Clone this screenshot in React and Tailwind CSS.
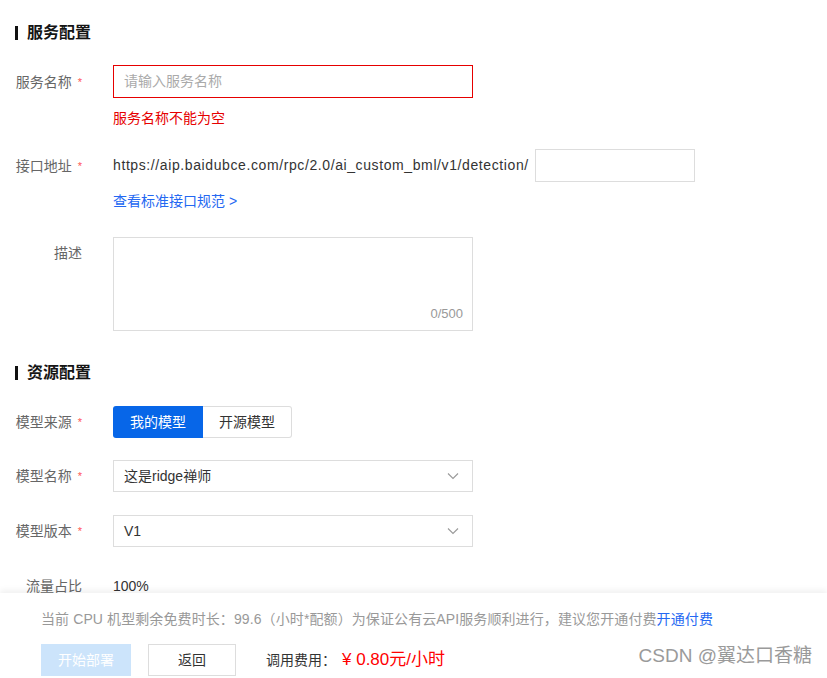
import React from "react";

const FONT = { fontFamily: '"Liberation Sans", "Noto Sans CJK SC", sans-serif' };

function Label({ children, required }) {
  return (
    <div className="w-[67px] shrink-0 flex justify-end items-center text-[14px] leading-[20px] text-[#666]">
      <span>{children}</span>
      {required && <span className="ml-[6px] text-[#f55] text-[11px]">*</span>}
    </div>
  );
}

function SectionTitle({ children }) {
  return (
    <div className="flex items-center h-[20px]">
      <span className="w-[3px] h-[14px] bg-[#111]" />
      <span className="ml-[9px] text-[16px] font-bold text-[#151515]">{children}</span>
    </div>
  );
}

function Chevron() {
  return (
    <svg width="12" height="8" viewBox="0 0 12 8" fill="none">
      <path d="M1 1.5L6 6.5L11 1.5" stroke="#999" strokeWidth="1.1" />
    </svg>
  );
}

function Select({ value }) {
  return (
    <div className="w-[360px] h-[32px] border border-[#ddd] flex items-center justify-between px-[10px] text-[14px] text-[#333]">
      <span>{value}</span>
      <span className="mr-[3px]"><Chevron /></span>
    </div>
  );
}

export default function App() {
  return (
    <div className="relative w-[827px] h-[678px] bg-white overflow-hidden" style={FONT}>
      <div className="px-[15px] pt-[23px]">
        <SectionTitle>服务配置</SectionTitle>

        <div className="mt-[22px] flex items-center gap-[31px]">
          <Label required>服务名称</Label>
          <div className="w-[360px] h-[33px] border border-[#e60000] flex items-center px-[10px] text-[14px] text-[#aaa]">
            请输入服务名称
          </div>
        </div>
        <div className="mt-[10px] ml-[98px] text-[14px] leading-[20px] text-[#e60000]">服务名称不能为空</div>

        <div className="mt-[21px] flex items-center gap-[31px]">
          <Label required>接口地址</Label>
          <div className="flex items-center">
            <span className="text-[14px] text-[#333] tracking-[0.6px]">https://aip.baidubce.com/rpc/2.0/ai_custom_bml/v1/detection/</span>
            <div className="ml-[6px] w-[160px] h-[33px] border border-[#ddd]" />
          </div>
        </div>
        <div className="mt-[9px] ml-[98px] text-[14px] leading-[20px] text-[#2468f2]">查看标准接口规范 &gt;</div>

        <div className="mt-[26px] flex items-start gap-[31px]">
          <div className="pt-[6px]"><Label>描述</Label></div>
          <div className="relative w-[360px] h-[94px] border border-[#ddd]">
            <span className="absolute right-[9px] bottom-[7px] text-[13px] text-[#999]">0/500</span>
          </div>
        </div>

        <div className="mt-[32px]">
          <SectionTitle>资源配置</SectionTitle>
        </div>

        <div className="mt-[23px] flex items-center gap-[31px]">
          <Label required>模型来源</Label>
          <div className="flex h-[32px] text-[14px]">
            <div className="w-[90px] flex items-center justify-center bg-[#0766e8] text-white rounded-l-[3px]">我的模型</div>
            <div className="w-[89px] flex items-center justify-center border border-[#ddd] border-l-0 text-[#333] rounded-r-[3px]">开源模型</div>
          </div>
        </div>

        <div className="mt-[22px] flex items-center gap-[31px]">
          <Label required>模型名称</Label>
          <Select value="这是ridge禅师" />
        </div>

        <div className="mt-[23px] flex items-center gap-[31px]">
          <Label required>模型版本</Label>
          <Select value="V1" />
        </div>

        <div className="mt-[29px] flex items-center gap-[31px]">
          <Label>流量占比</Label>
          <span className="text-[14px] leading-[20px] text-[#333]">100%</span>
        </div>
      </div>

      <div className="absolute left-0 right-0 bottom-0 h-[85px] bg-white shadow-[0_-3px_6px_rgba(0,0,0,0.06)] px-[41px] pt-[16px]">
        <div className="text-[14px] leading-[20px] text-[#999] tracking-[0.1px]">
          当前 CPU 机型剩余免费时长：99.6（小时*配额）为保证公有云API服务顺利进行，建议您开通付费<span className="text-[#2468f2]">开通付费</span>
        </div>
        <div className="mt-[15px] flex items-center">
          <div className="w-[90px] h-[32px] flex items-center justify-center bg-[#cce4fb] text-white text-[14px]">开始部署</div>
          <div className="ml-[17px] w-[88px] h-[32px] flex items-center justify-center border border-[#ddd] text-[#333] text-[14px]">返回</div>
          <span className="ml-[30px] text-[14px] text-[#333]">调用费用：</span>
          <span className="ml-[6px] text-[17px] text-[#f00]">¥ 0.80元/小时</span>
        </div>
      </div>

      <div className="absolute right-[15px] bottom-[8px] text-[19px] text-[#9a9a9a]">CSDN @翼达口香糖</div>
    </div>
  );
}
